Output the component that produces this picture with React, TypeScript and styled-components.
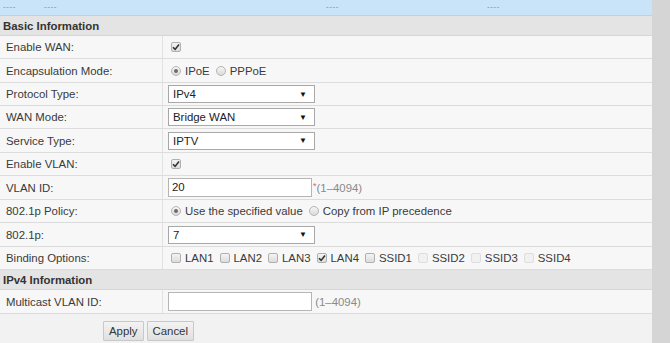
import React from "react";
import styled, { createGlobalStyle } from "styled-components";

const GlobalStyle = createGlobalStyle`
  html, body {
    margin: 0;
    padding: 0;
    background: #d5d5d5;
  }
  body {
    font-family: "Liberation Sans", Arial, sans-serif;
    font-size: 11.4px;
    color: #333;
  }
`;

const Page = styled.div`
  width: 652px;
  height: 343px;
  background: #f2f2f2;
  overflow: hidden;
`;

const TopBar = styled.div`
  display: grid;
  grid-template-columns: 41px 282px 161px 1fr;
  height: 16px;
  padding-left: 3px;
  background: #c9e3f8;
  border-bottom: 1px solid #bcd3e6;
  box-sizing: border-box;
  font-size: 8px;
  line-height: 13px;
  color: #7388a2;
  letter-spacing: 0.6px;
`;

const SectionHeader = styled.div`
  height: 20px;
  line-height: 20px;
  padding-left: 3px;
  background: #e4e4e4;
  border-bottom: 1px solid #d6d6d6;
  box-sizing: border-box;
  font-weight: bold;
  color: #333;
`;

const Row = styled.div<{ $h?: number }>`
  display: grid;
  grid-template-columns: 163px 1fr;
  height: ${(p) => p.$h ?? 23}px;
  background: #f7f7f7;
  border-bottom: 1px solid #dcdcdc;
  box-sizing: border-box;
`;

const Label = styled.div`
  display: flex;
  align-items: center;
  padding-left: 6px;
  border-right: 1px solid #e2e2e2;
  color: #3a3a3a;
`;

const Value = styled.div`
  display: flex;
  align-items: center;
  padding-left: 5px;
  color: #3a3a3a;
`;

const SelectBox = styled.div<{ $w?: number }>`
  display: flex;
  align-items: center;
  justify-content: space-between;
  width: ${(p) => p.$w ?? 147}px;
  height: 18px;
  padding: 0 7px 0 4px;
  background: #fff;
  border: 1px solid #a8a8a8;
  box-sizing: border-box;
  color: #222;
`;

const Arrow = styled.span`
  font-size: 8px;
  color: #111;
`;

const TextInput = styled.div`
  width: 144px;
  height: 19px;
  line-height: 17px;
  padding-left: 3px;
  background: #fff;
  border: 1px solid #b5b5b5;
  box-sizing: border-box;
  color: #222;
`;

const Hint = styled.span`
  color: #8a8a8a;
`;

const Star = styled.span`
  color: #e06060;
  font-size: 9px;
  align-self: flex-start;
  margin: 5px 0 0 1px;
`;

const Opt = styled.span`
  display: inline-flex;
  align-items: center;
  gap: 4px;
  margin-right: 3px;
`;

const BoxWrap = styled.span<{ $disabled?: boolean }>`
  display: inline-flex;
  align-items: center;
  justify-content: center;
  width: 10px;
  height: 10px;
  margin-left: 3px;
  border: 1px solid ${(p) => (p.$disabled ? "#dedede" : "#b0b0b0")};
  border-radius: 2px;
  background: ${(p) => (p.$disabled ? "#f1f1f1" : "linear-gradient(#f4f4f4, #dcdcdc)")};
  box-sizing: border-box;
`;

const RadioWrap = styled.span`
  display: inline-flex;
  align-items: center;
  justify-content: center;
  width: 10px;
  height: 10px;
  margin-left: 3px;
  border: 1px solid #b5b5b5;
  border-radius: 50%;
  background: linear-gradient(#f6f6f6, #dadada);
  box-sizing: border-box;
`;

const Dot = styled.span`
  width: 4px;
  height: 4px;
  border-radius: 50%;
  background: #6c6c6c;
`;

const ButtonBar = styled.div`
  display: flex;
  gap: 3px;
  padding: 7px 0 0 103px;
  height: 29px;
  box-sizing: border-box;
  background: #f2f2f2;
`;

const Button = styled.button`
  height: 20px;
  padding: 0 5px;
  font-family: "Liberation Sans", Arial, sans-serif;
  font-size: 11.4px;
  color: #333;
  background: linear-gradient(#f3f3f3, #e0e0e0);
  border: 1px solid #c8c8c8;
  border-radius: 1px;
`;

const Checkbox = ({ checked, disabled }: { checked?: boolean; disabled?: boolean }) => (
  <BoxWrap $disabled={disabled}>
    {checked && (
      <svg width="8" height="8" viewBox="0 0 8 8">
        <path d="M1 4.2 L3.1 6.4 L7 1.4" stroke="#333" strokeWidth="1.6" fill="none" />
      </svg>
    )}
  </BoxWrap>
);

const Radio = ({ checked }: { checked?: boolean }) => (
  <RadioWrap>{checked && <Dot />}</RadioWrap>
);

const Select = ({ value }: { value: string }) => (
  <SelectBox>
    <span>{value}</span>
    <Arrow>▼</Arrow>
  </SelectBox>
);

const bindings = [
  { name: "LAN1" },
  { name: "LAN2" },
  { name: "LAN3" },
  { name: "LAN4", checked: true },
  { name: "SSID1" },
  { name: "SSID2", disabled: true },
  { name: "SSID3", disabled: true },
  { name: "SSID4", disabled: true },
];

const App = () => {
  return (
    <>
      <GlobalStyle />
      <Page>
        <TopBar>
          <span>----</span>
          <span>----</span>
          <span>----</span>
          <span>----</span>
        </TopBar>
        <SectionHeader>Basic Information</SectionHeader>
        <Row>
          <Label>Enable WAN:</Label>
          <Value>
            <Checkbox checked />
          </Value>
        </Row>
        <Row $h={24}>
          <Label>Encapsulation Mode:</Label>
          <Value>
            <Opt>
              <Radio checked />
              IPoE
            </Opt>
            <Opt>
              <Radio />
              PPPoE
            </Opt>
          </Value>
        </Row>
        <Row>
          <Label>Protocol Type:</Label>
          <Value>
            <Select value="IPv4" />
          </Value>
        </Row>
        <Row>
          <Label>WAN Mode:</Label>
          <Value>
            <Select value="Bridge WAN" />
          </Value>
        </Row>
        <Row $h={24}>
          <Label>Service Type:</Label>
          <Value>
            <Select value="IPTV" />
          </Value>
        </Row>
        <Row>
          <Label>Enable VLAN:</Label>
          <Value>
            <Checkbox checked />
          </Value>
        </Row>
        <Row $h={24}>
          <Label>VLAN ID:</Label>
          <Value>
            <TextInput>20</TextInput>
            <Star>*</Star>
            <Hint>(1–4094)</Hint>
          </Value>
        </Row>
        <Row>
          <Label>802.1p Policy:</Label>
          <Value>
            <Opt>
              <Radio checked />
              Use the specified value
            </Opt>
            <Opt>
              <Radio />
              Copy from IP precedence
            </Opt>
          </Value>
        </Row>
        <Row $h={24}>
          <Label>802.1p:</Label>
          <Value>
            <Select value="7" />
          </Value>
        </Row>
        <Row>
          <Label>Binding Options:</Label>
          <Value>
            {bindings.map((b) => (
              <Opt key={b.name}>
                <Checkbox checked={b.checked} disabled={b.disabled} />
                {b.name}
              </Opt>
            ))}
          </Value>
        </Row>
        <SectionHeader>IPv4 Information</SectionHeader>
        <Row $h={24}>
          <Label>Multicast VLAN ID:</Label>
          <Value>
            <TextInput />
            <Hint>&nbsp;(1–4094)</Hint>
          </Value>
        </Row>
        <ButtonBar>
          <Button>Apply</Button>
          <Button>Cancel</Button>
        </ButtonBar>
      </Page>
    </>
  );
};

export default App;
